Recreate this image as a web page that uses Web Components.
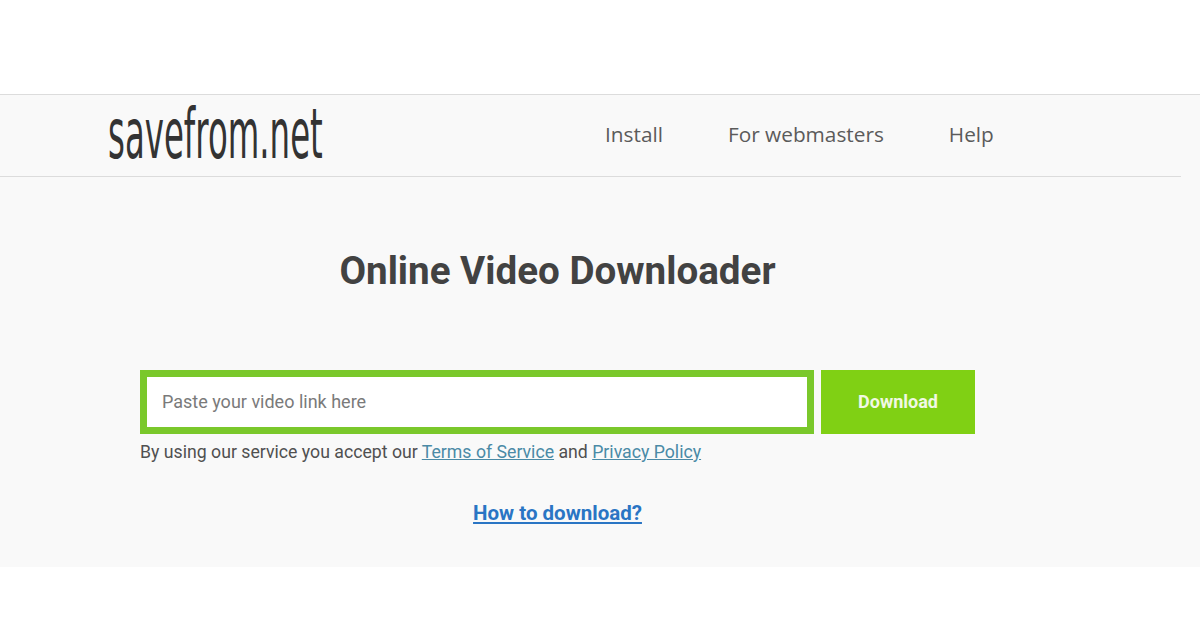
<!DOCTYPE html>
<html lang="en">
<head>
<meta charset="utf-8">
<title>savefrom.net</title>
<style>
  html, body { margin: 0; background: #fff; }
  body { font-family: Roboto, "Liberation Sans", sans-serif; }
</style>
</head>
<body>
<sf-page>
  <sf-header></sf-header>
  <sf-hero></sf-hero>
</sf-page>

<script>
"use strict";

// Page frame
class SfPage extends HTMLElement {
  constructor() {
    super();
    this.attachShadow({mode: "open"});
    this.shadowRoot.innerHTML = `
      <style>
        :host { display: block; height: 630px; padding-top: 94px; box-sizing: border-box; background: #fff; }
        .panel { background: #f9f9f9; border-top: 1px solid #dcdcdc; height: 472px; }
      </style>
      <div class="panel"><slot></slot></div>
    `;
  }
}
customElements.define("sf-page", SfPage);

// Top bar
class SfHeader extends HTMLElement {
  constructor() {
    super();
    this.attachShadow({mode: "open"});
    this.shadowRoot.innerHTML = `
      <style>
        :host { display: flex; align-items: center; width: 1181px; height: 82px; box-sizing: border-box; padding-left: 108px; border-bottom: 1px solid #dcdcdc; }
        .logo { width: 215px; height: 60px; margin-top: -3px; color: #333; font: 400 70px/60px "DejaVu Sans", sans-serif; white-space: nowrap; transform-origin: 0 50%; transform: scaleX(.463); }
        nav { display: flex; gap: 65px; margin-left: 282px; margin-top: -4px; font: 400 20.8px "Open Sans", sans-serif; color: #5b5b5b; }
      </style>
      <div class="logo">savefrom.net</div>
      <nav><span>Install</span><span>For webmasters</span><span>Help</span></nav>
    `;
  }
}
customElements.define("sf-header", SfHeader);

// Title, form and links
class SfHero extends HTMLElement {
  constructor() {
    super();
    this.attachShadow({mode: "open"});
    this.shadowRoot.innerHTML = `
      <style>
        :host { display: block; width: 835px; margin-left: 140px; padding-top: 71px; font-family: Roboto, sans-serif; }
        h1 { margin: 0 0 77px; width: 835px; text-align: center; font-size: 38.6px; line-height: 45px; font-weight: 700; color: #424242; }
        .form { display: flex; gap: 7px; height: 64px; }
        .field { flex: 1; display: flex; align-items: center; box-sizing: border-box; padding-left: 15px; padding-bottom: 1px; background: #fff; border: 7px solid #7ac82b; font-size: 18px; color: #7a7a7a; }
        .btn { display: flex; align-items: center; justify-content: center; width: 154px; padding-bottom: 1px; box-sizing: border-box; background: #80d014; color: #f1f8e4; font-size: 18px; font-weight: 700; }
        .terms { margin-top: 8px; font-size: 17.7px; line-height: 21px; color: #505050; white-space: nowrap; }
        .terms a { color: #4a8aa6; text-decoration: underline; }
        .how { margin-top: 38px; text-align: center; font-size: 20.5px; line-height: 24px; font-weight: 700; }
        .how a { color: #2a75c4; text-decoration: underline; }
      </style>
      <h1>Online Video Downloader</h1>
      <div class="form">
        <div class="field" role="textbox">Paste your video link here</div>
        <div class="btn" role="button">Download</div>
      </div>
      <div class="terms">By using our service you accept our <a>Terms of Service</a> and <a>Privacy Policy</a></div>
      <div class="how"><a>How to download?</a></div>
    `;
  }
}
customElements.define("sf-hero", SfHero);
</script>
</body>
</html>
